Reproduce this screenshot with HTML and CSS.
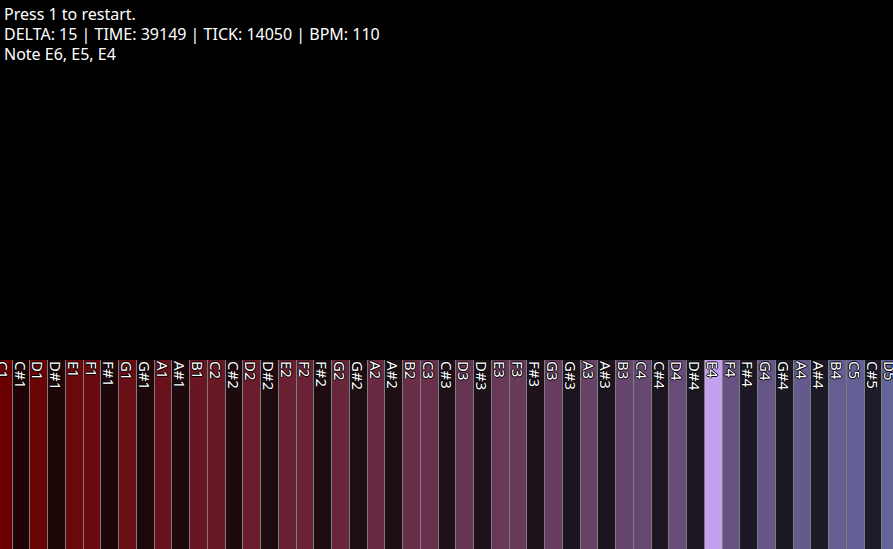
FILE: index.html
```html
<!DOCTYPE html>
<html lang="en">

<head>
  <title>Piano</title>
  <meta charset="utf-8">
  <meta name="viewport" content="width=device-width, initial-scale=1.0">
  <link rel="stylesheet" href="styles.css">
</head>

<body>
  <div class="info">
    <div>Press 1 to restart.</div>
    <div>DELTA: 15 | TIME: 39149 | TICK: 14050 | BPM: 110</div>
    <div>Note E6, E5, E4</div>
  </div>

  <div class="keyboard" id="keyboard"></div>

  <script>
    const names = ['C', 'C#', 'D', 'D#', 'E', 'F', 'F#', 'G', 'G#', 'A', 'A#', 'B'];
    const active = ['E6', 'E5', 'E4'];
    const total = 51;

    function mix(a, b, t) {
      return 'rgb(' + a.map((v, i) => Math.round(v + (b[i] - v) * t)).join(',') + ')';
    }

    function buildKeyboard() {
      const keyboard = document.getElementById('keyboard');
      for (let i = 0; i < total; i++) {
        const name = names[i % 12] + (Math.floor(i / 12) + 1);
        const sharp = name.includes('#');
        const t = i / (total - 1);
        const key = document.createElement('div');
        key.className = 'key' + (sharp ? ' sharp' : '');
        if (active.includes(name)) {
          key.classList.add('active');
        } else if (sharp) {
          key.style.background = mix([30, 4, 4], [28, 28, 44], t);
        } else {
          key.style.background = mix([107, 0, 0], [100, 100, 156], t);
        }
        key.innerHTML = '<span class="label">' + name + '</span>';
        keyboard.appendChild(key);
      }
    }

    window.onload = buildKeyboard;
  </script>
</body>

</html>
```

FILE: styles.css
```css
html, body {
  margin: 0;
  height: 100%;
}

body {
  background-color: #000;
  color: #fff;
  font-family: "Noto Sans", sans-serif;
  display: flex;
  flex-direction: column;
  overflow: hidden;
}

.info {
  flex: 1;
  padding: 4px 4px 0;
  font-size: 16px;
  line-height: 20px;
}

.keyboard {
  height: 189px;
  display: flex;
  justify-content: center;
  overflow: hidden;
}

.key {
  flex: none;
  width: 16.76px;
  border-left: 1px solid #7c7c7c;
  overflow: hidden;
}

.key.active {
  background-color: #c4a0ee;
}

.label {
  display: block;
  writing-mode: vertical-rl;
  font-size: 15px;
  line-height: 16px;
  padding-top: 1px;
  text-shadow: 1px 0 #000, -1px 0 #000, 0 1px #000, 0 -1px #000;
}
```
